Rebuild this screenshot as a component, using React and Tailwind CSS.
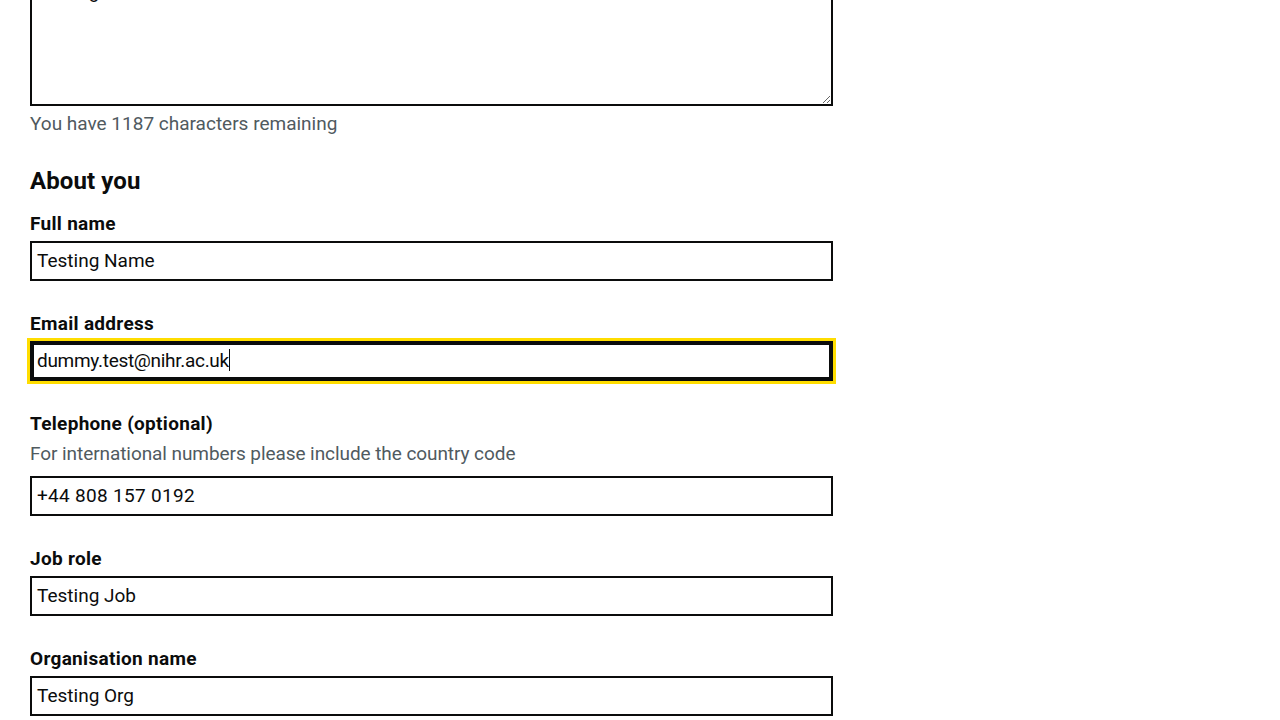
import React from "react";

function Field({ label, hint, value, focused, valueTrack = "" }) {
  return (
    <div className="mb-[30px]">
      <div className="text-[19px] leading-[25px] font-bold mb-[5px] tracking-[0.3px]">{label}</div>
      {hint && (
        <div className="text-[19px] leading-[25px] text-[#505a5f] mb-[10px] tracking-[-0.07px]">{hint}</div>
      )}
      <div
        className={
          "h-[40px] border-2 border-[#0b0c0c] px-[5px] pb-[2px] flex items-center text-[19px] leading-[25px] bg-white " +
          (focused ? "outline-[3px] outline-solid outline-[#ffdd00] shadow-[inset_0_0_0_2px_#0b0c0c]" : "")
        }
      >
        <span className={valueTrack}>{value}</span>
        {focused && <span className="inline-block w-px h-[22px] bg-[#0b0c0c]" />}
      </div>
    </div>
  );
}

export default function App() {
  return (
    <div className="bg-white min-h-[720px] overflow-hidden">
      <div className="font-['Roboto',sans-serif] text-[#0b0c0c] ml-[30px] w-[803px] -mt-[28px]">
        <textarea
          readOnly
          defaultValue="Testing"
          className="block w-full h-[134px] border-2 border-[#0b0c0c] p-[5px] text-[19px] leading-[25px] text-[#0b0c0c] font-['Roboto',sans-serif] mb-[5px] resize-y outline-none"
        />
        <div className="text-[19px] leading-[25px] text-[#505a5f]">You have 1187 characters remaining</div>
        <h2 className="mt-[30px] mb-[15px] text-[24px] leading-[30px] font-bold tracking-[0.1px]">About you</h2>
        <Field label="Full name" value="Testing Name" />
        <Field label="Email address" value="dummy.test@nihr.ac.uk" focused valueTrack="tracking-[-0.3px]" />
        <Field
          label="Telephone (optional)"
          hint="For international numbers please include the country code"
          value="+44 808 157 0192"
          valueTrack="tracking-[0.3px]"
        />
        <Field label="Job role" value="Testing Job" />
        <Field label="Organisation name" value="Testing Org" />
      </div>
    </div>
  );
}
